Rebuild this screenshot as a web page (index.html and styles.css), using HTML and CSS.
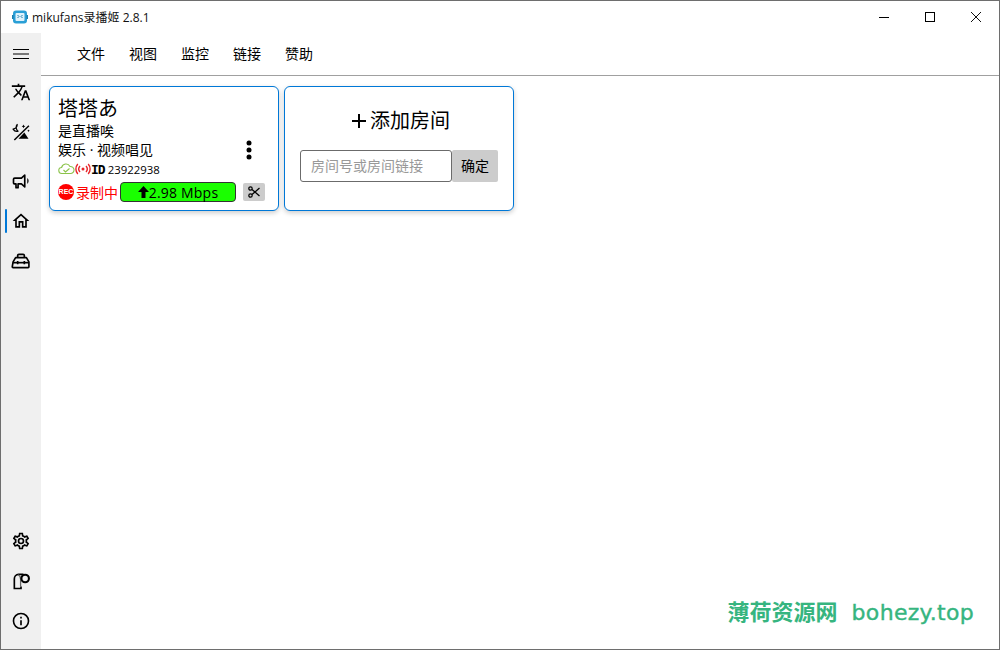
FILE: index.html
```html
<!DOCTYPE html>
<html lang="zh-CN">
<head>
    <meta charset="UTF-8">
    <title>mikufans录播姬 2.8.1</title>
    <link rel="stylesheet" href="styles.css">
</head>
<body>
<div class="window">
    <div class="titlebar">
        <svg class="app-icon" width="16" height="16" viewBox="0 0 16 16"><rect x="1" y="1.500" width="14" height="13" rx="3" fill="#2a9fd6"/><path d="M0 6h1.500v4H0zM14.500 6H16v4h-1.500z" fill="#1c7fae"/><rect x="3.500" y="4" width="9" height="8" rx="1" fill="#dff2fb"/><path d="M5.500 6l1.500 1.500L5.500 9M10.500 6L9 7.500l1.500 1.500" fill="none" stroke="#1c7fae" stroke-width="1"/></svg>
        <span class="app-title">mikufans录播姬 2.8.1</span>
        <div class="win-buttons">
            <div class="win-btn"><svg width="10" height="10" viewBox="0 0 10 10"><path d="M0 5.500h10" stroke="#000" stroke-width="1"/></svg></div>
            <div class="win-btn"><svg width="10" height="10" viewBox="0 0 10 10"><rect x=".5" y=".5" width="9" height="9" fill="none" stroke="#000" stroke-width="1"/></svg></div>
            <div class="win-btn"><svg width="10" height="10" viewBox="0 0 10 10"><path d="M0 0l10 10M10 0L0 10" stroke="#111" stroke-width="1"/></svg></div>
        </div>
    </div>
    <div class="body">
        <div class="sidebar">
            <div class="side-item burger"><svg width="16" height="10" viewBox="0 0 16 10"><path d="M0 .5h16M0 5h16M0 9.500h16" stroke="#000" stroke-width="1"/></svg></div>
            <div class="side-item"><svg width="20" height="20" viewBox="0 0 24 24"><path d="M12.870,15.070L10.330,12.560L10.360,12.530C12.100,10.590 13.340,8.360 14.070,6H17V4H10V2H8V4H1V6H12.170C11.500,7.920 10.440,9.750 9,11.350C8.070,10.320 7.300,9.190 6.690,8H4.690C5.420,9.630 6.420,11.170 7.670,12.560L2.580,17.580L4,19L9,14L12.110,17.110L12.870,15.070M18.500,10H16.500L12,22H14L15.120,19H19.870L21,22H23L18.500,10M15.880,17L17.500,12.670L19.120,17H15.880Z"/></svg></div>
            <div class="side-item"><svg width="20" height="20" viewBox="0 0 24 24"><path d="M7.500 3a5.500 5.500 0 0 0 1 8A5.500 5.500 0 0 1 2.500 8.500 6 6 0 0 0 7.500 3z" fill="none" stroke="#000" stroke-width="1.500" stroke-linejoin="round"/><path d="M4 21.500L21.500 4.500" stroke="#000" stroke-width="1.800"/><path d="M16 12.500l5 7.500H9z"/><path d="M15 3l.7 1.500 1.500.7-1.500.7L15 7.500l-.7-1.600-1.500-.7 1.500-.7z"/><path d="M21 9l.5 1 1 .5-1 .5-.5 1-.5-1-1-.5 1-.5z"/></svg></div>
            <div class="side-item group-start"><svg width="20" height="20" viewBox="0 0 24 24"><path d="M12.500 8.500H4.500a1.500 1.500 0 0 0-1.500 1.500v4a1.500 1.500 0 0 0 1.500 1.500H6V20h2.500v-4.500h4l4 3.500V5z" fill="none" stroke="#000" stroke-width="2" stroke-linejoin="round"/><path d="M19.500 8.500a4.500 4.500 0 0 1 0 7z"/></svg></div>
            <div class="side-item active"><svg width="20" height="20" viewBox="0 0 24 24"><path d="M12 5.690L17 10.190V18H15V12H9V18H7V10.190L12 5.690M12 3L2 12H5V20H11V14H13V20H19V12H22"/></svg></div>
            <div class="side-item"><svg width="20" height="20" viewBox="0 0 24 24"><path d="M2.500 13l3-5h13l3 5v6a1 1 0 0 1-1 1h-18a1 1 0 0 1-1-1z" fill="none" stroke="#000" stroke-width="2" stroke-linejoin="round"/><path d="M8 8V5.500A1.500 1.500 0 0 1 9.500 4h5A1.500 1.500 0 0 1 16 5.500V8" fill="none" stroke="#000" stroke-width="2"/><path d="M2.500 14h19" stroke="#000" stroke-width="2"/><path d="M7 12h2v4H7zM15 12h2v4h-2z"/></svg></div>
            <div class="side-bottom">
                <div class="side-item"><svg width="20" height="20" viewBox="0 0 24 24"><path d="M12,8A4,4 0 0,1 16,12A4,4 0 0,1 12,16A4,4 0 0,1 8,12A4,4 0 0,1 12,8M12,10A2,2 0 0,0 10,12A2,2 0 0,0 12,14A2,2 0 0,0 14,12A2,2 0 0,0 12,10M10,22C9.750,22 9.540,21.820 9.500,21.580L9.130,18.930C8.500,18.680 7.960,18.340 7.440,17.940L4.950,18.950C4.730,19.030 4.460,18.950 4.340,18.730L2.340,15.270C2.210,15.050 2.270,14.780 2.460,14.630L4.570,12.970L4.500,12L4.570,11L2.460,9.370C2.270,9.220 2.210,8.950 2.340,8.730L4.340,5.270C4.460,5.050 4.730,4.960 4.950,5.050L7.440,6.050C7.960,5.660 8.500,5.320 9.130,5.070L9.500,2.420C9.540,2.180 9.750,2 10,2H14C14.250,2 14.460,2.180 14.500,2.420L14.870,5.070C15.500,5.320 16.040,5.660 16.560,6.050L19.050,5.050C19.270,4.960 19.540,5.050 19.660,5.270L21.660,8.730C21.790,8.950 21.730,9.220 21.540,9.370L19.430,11L19.500,12L19.430,13L21.540,14.630C21.730,14.780 21.790,15.050 21.660,15.270L19.660,18.730C19.540,18.950 19.270,19.040 19.050,18.950L16.560,17.950C16.040,18.340 15.500,18.680 14.870,18.930L14.500,21.580C14.460,21.820 14.250,22 14,22H10M11.250,4L10.880,6.610C9.680,6.860 8.620,7.500 7.850,8.390L5.440,7.350L4.690,8.650L6.800,10.200C6.400,11.370 6.400,12.640 6.800,13.800L4.680,15.360L5.430,16.660L7.860,15.620C8.630,16.500 9.680,17.140 10.870,17.380L11.240,20H12.760L13.130,17.390C14.320,17.140 15.370,16.500 16.140,15.620L18.570,16.660L19.320,15.360L17.200,13.810C17.600,12.640 17.600,11.370 17.200,10.200L19.310,8.650L18.560,7.350L16.150,8.390C15.380,7.500 14.320,6.860 13.120,6.620L12.750,4H11.250Z"/></svg></div>
                <div class="side-item"><svg width="20" height="20" viewBox="0 0 24 24"><path d="M15 4H9C6 4 4 6.500 4 9.500V21h8v-2.500" fill="none" stroke="#000" stroke-width="2"/><path d="M8.500 4.500C10.500 5.500 11.500 7.500 11.500 10v9" fill="none" stroke="#666" stroke-width="1.500"/><circle cx="17" cy="9" r="4.500" fill="none" stroke="#000" stroke-width="2.500"/></svg></div>
                <div class="side-item"><svg width="20" height="20" viewBox="0 0 24 24"><path d="M11,9H13V7H11M12,20C7.590,20 4,16.410 4,12C4,7.590 7.590,4 12,4C16.410,4 20,7.590 20,12C20,16.410 16.410,20 12,20M12,2A10,10 0 0,0 2,12A10,10 0 0,0 12,22A10,10 0 0,0 22,12A10,10 0 0,0 12,2M11,17H13V11H11V17Z"/></svg></div>
            </div>
        </div>
        <div class="main">
            <div class="menubar">
                <span class="menu-item">文件</span>
                <span class="menu-item">视图</span>
                <span class="menu-item">监控</span>
                <span class="menu-item">链接</span>
                <span class="menu-item">赞助</span>
            </div>
            <div class="rooms">
                <div class="card room-card">
                    <div class="room-name">塔塔あ</div>
                    <div class="room-mid">
                        <div class="room-info">
                            <div class="info-line">是直播唉</div>
                            <div class="info-line">娱乐 · 视频唱见</div>
                            <div class="id-row">
                                <svg width="17" height="12" viewBox="0 0 17 12"><path d="M4 10.500a3 3 0 0 1-.4-6A4.500 4.500 0 0 1 12 3.500a3.500 3.500 0 0 1 1 7z" fill="none" stroke="#8bc34a" stroke-width="1.100"/><path d="M5.500 7l2 2 4-3.500" fill="none" stroke="#8bc34a" stroke-width="1.100"/></svg>
                                <svg width="16" height="12" viewBox="0 0 16 12"><circle cx="8" cy="6" r="1.500" fill="#e8252a"/><path d="M5 3a4.500 4.500 0 0 0 0 6M11 3a4.500 4.500 0 0 1 0 6M2.800 1a7.500 7.500 0 0 0 0 10M13.200 1a7.500 7.500 0 0 1 0 10" fill="none" stroke="#e8252a" stroke-width="1.400"/></svg>
                                <span class="id-label">ID</span>
                                <span class="id-num">23922938</span>
                            </div>
                        </div>
                        <svg class="dots" width="6" height="20" viewBox="0 0 6 20"><circle cx="3" cy="3" r="2.500"/><circle cx="3" cy="10" r="2.500"/><circle cx="3" cy="17" r="2.500"/></svg>
                    </div>
                    <div class="room-status">
                        <div class="rec-badge">REC</div>
                        <span class="rec-text">录制中</span>
                        <div class="rate-pill">
                            <svg width="11" height="12" viewBox="0 0 11 12"><path d="M5.500 0L11 6H7.500v6h-4V6H0z"/></svg>
                            <span>2.98 Mbps</span>
                        </div>
                        <div class="cut-btn"><svg width="12" height="12" viewBox="0 0 12 12"><circle cx="2.500" cy="2.500" r="1.700" fill="none" stroke="#000" stroke-width="1.200"/><circle cx="2.500" cy="9.500" r="1.700" fill="none" stroke="#000" stroke-width="1.200"/><path d="M4 3.500L11.500 10M4 8.500L11.500 2" stroke="#000" stroke-width="1.300"/></svg></div>
                    </div>
                </div>
                <div class="card add-card">
                    <div class="add-title"><svg width="16" height="16" viewBox="0 0 16 16"><path d="M8 1v14M1 8h14" stroke="#000" stroke-width="2"/></svg><span>添加房间</span></div>
                    <div class="add-form">
                        <input class="room-input" type="text" placeholder="房间号或房间链接">
                        <button class="ok-btn" type="button">确定</button>
                    </div>
                </div>
            </div>
        </div>
    </div>
    <div class="watermark"><span class="wm-cn">薄荷资源网</span><span class="wm-en">bohezy.top</span></div>
</div>
</body>
</html>
```

FILE: styles.css
```css
* {
    box-sizing: border-box;
}
html, body {
    margin: 0;
    padding: 0;
    background: #fff;
}
body {
    font-family: "Open Sans", "Noto Sans CJK SC", sans-serif;
    color: #000;
    overflow: hidden;
}
.window {
    position: relative;
    width: 1000px;
    height: 650px;
    border: 1px solid #6e6e6e;
    display: flex;
    flex-direction: column;
}
.titlebar {
    height: 32px;
    display: flex;
    align-items: center;
    padding-left: 11px;
    flex-shrink: 0;
}
.app-title {
    font-size: 12px;
    margin-left: 4px;
    color: #111;
}
.win-buttons {
    margin-left: auto;
    display: flex;
}
.win-btn {
    width: 46px;
    height: 32px;
    display: flex;
    align-items: center;
    justify-content: center;
}
.body {
    flex: 1;
    display: flex;
    min-height: 0;
}
.sidebar {
    width: 40px;
    background: #f0f0f0;
    display: flex;
    flex-direction: column;
    padding: 3px 0 8px;
    flex-shrink: 0;
}
.side-item {
    position: relative;
    height: 40px;
    display: flex;
    align-items: center;
    justify-content: center;
    flex-shrink: 0;
}
.burger {
    height: 36px;
}
.group-start {
    margin-top: 9px;
}
.active::before {
    content: "";
    position: absolute;
    left: 4px;
    top: 8px;
    width: 2px;
    height: 24px;
    background: #0078d7;
    border-radius: 1px;
}
.side-bottom {
    margin-top: auto;
}
.main {
    flex: 1;
    min-width: 0;
}
.menubar {
    height: 43px;
    padding: 0 0 2px 24px;
    border-bottom: 1px solid #a0a0a0;
    display: flex;
    align-items: center;
}
.menu-item {
    font-size: 14px;
    padding: 0 12px;
}
.rooms {
    display: flex;
    gap: 5px;
    padding: 10px 8px;
}
.card {
    width: 230px;
    height: 125px;
    background: #fff;
    border: 1px solid #0078d7;
    border-radius: 6px;
    box-shadow: 0 2px 5px rgba(0, 0, 0, 0.2);
}
.room-card {
    padding: 9px 8px 0;
    display: flex;
    flex-direction: column;
}
.room-name {
    font-size: 20px;
    line-height: 25px;
}
.room-mid {
    display: flex;
    align-items: center;
    justify-content: space-between;
    padding-right: 18px;
}
.info-line {
    font-size: 14px;
    line-height: 19px;
}
.id-row {
    display: flex;
    align-items: center;
    height: 20px;
}
.id-label {
    font-size: 13px;
    font-weight: 700;
    font-family: "DejaVu Sans Mono", monospace;
    letter-spacing: -1px;
}
.id-num {
    font-size: 11.400px;
    margin-left: 3px;
}
.room-status {
    display: flex;
    align-items: center;
    height: 20px;
    margin-top: 3px;
}
.rec-badge {
    width: 16px;
    height: 16px;
    border-radius: 50%;
    background: #f00;
    color: #fff;
    font-size: 7px;
    font-weight: 700;
    line-height: 16px;
    text-align: center;
    font-family: "Liberation Sans", sans-serif;
}
.rec-text {
    color: #f00;
    font-size: 14px;
    margin-left: 2px;
}
.rate-pill {
    width: 116px;
    height: 20px;
    margin-left: 2px;
    background: #1aff00;
    border: 1px solid #333;
    border-radius: 4px;
    display: flex;
    align-items: center;
    justify-content: center;
    font-size: 14px;
    letter-spacing: 0.2px;
}
.cut-btn {
    width: 22px;
    height: 18px;
    margin-left: 7px;
    background: #ccc;
    border-radius: 2px;
    display: flex;
    align-items: center;
    justify-content: center;
}
.add-card {
    display: flex;
    flex-direction: column;
    align-items: center;
    padding: 21px 0 0 3px;
}
.add-title {
    display: flex;
    align-items: center;
    gap: 3px;
    font-size: 20px;
    line-height: 26px;
}
.add-form {
    display: flex;
    margin: 16px 0 0 -3px;
}
.room-input {
    width: 152px;
    height: 32px;
    border: 1px solid #6b6b6b;
    border-radius: 3px;
    padding: 0 10px 2px;
    font-size: 14px;
    font-family: "Noto Sans CJK SC", sans-serif;
    outline: none;
}
.room-input::placeholder {
    color: #999;
}
.ok-btn {
    width: 46px;
    height: 32px;
    border: none;
    background: #ccc;
    border-radius: 2px;
    font-size: 14px;
    font-family: "Noto Sans CJK SC", sans-serif;
    color: #000;
    padding: 0 0 2px;
}
.watermark {
    position: absolute;
    right: 25px;
    bottom: 22px;
    display: flex;
    align-items: center;
    gap: 14px;
    color: #36b57f;
    font-size: 22px;
    line-height: 28px;
}
.wm-cn {
    font-weight: 700;
}
.wm-en {
    padding-top: 4px;
    font-family: "DejaVu Sans", sans-serif;
    letter-spacing: 0.3px;
    -webkit-text-stroke: 0.4px #36b57f;
}
```
